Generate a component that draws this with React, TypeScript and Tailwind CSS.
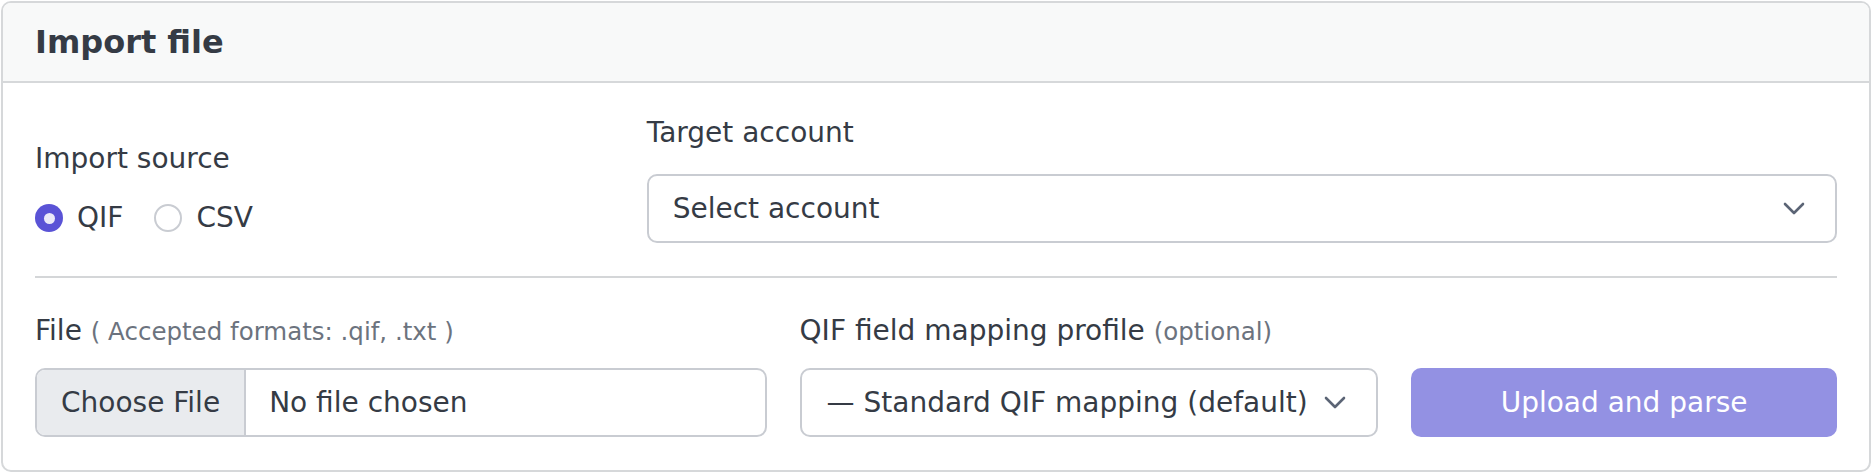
import React from "react";

function Chevron() {
  return (
    <svg width="22" height="13" viewBox="0 0 22 13" fill="none" className="shrink-0">
      <path d="M2 2l9 9 9-9" stroke="#5b6475" strokeWidth="2.6" strokeLinecap="round" strokeLinejoin="round" />
    </svg>
  );
}

function Radio({ label, checked }: { label: string; checked?: boolean }) {
  return (
    <label className="flex items-center gap-[14px]">
      {checked ? (
        <span className="flex h-[28px] w-[28px] items-center justify-center rounded-full bg-[#5a53d6]">
          <span className="h-[11px] w-[11px] rounded-full bg-[#ebeaf8]" />
        </span>
      ) : (
        <span className="h-[28px] w-[28px] rounded-full border-2 border-[#c9ccd2] bg-white" />
      )}
      <span>{label}</span>
    </label>
  );
}

export default function App() {
  return (
    <div className="bg-white p-px font-['DejaVu_Sans',sans-serif] text-[28px] leading-[42px] text-[#353b45]">
      <div className="overflow-hidden rounded-[10px] border-2 border-[#d6d8da]">
        <div className="flex h-[80px] items-center border-b-2 border-[#d6d8da] bg-[#f8f9f9] px-[32px]">
          <h2 className="text-[32px] font-bold">Import file</h2>
        </div>

        <div className="px-[32px] pt-[29px] pb-[33px]">
          <div className="grid grid-cols-12 items-end gap-x-[33px]">
            <div className="col-span-4 pb-[4px]">
              <div className="mb-[17px]">Import source</div>
              <div className="flex items-center gap-[31px]">
                <Radio label="QIF" checked />
                <Radio label="CSV" />
              </div>
            </div>
            <div className="col-span-8">
              <div className="mb-[20px]">Target account</div>
              <div className="flex h-[69px] items-center justify-between rounded-[10px] border-2 border-[#c9ccd2] bg-white pl-[24px] pr-[30px]">
                <span>Select account</span>
                <Chevron />
              </div>
            </div>
          </div>

          <div className="mt-[33px] mb-[32px] h-[2px] bg-[#d4d6d8]" />

          <div className="grid grid-cols-12 items-end gap-x-[33px]">
            <div className="col-span-5">
              <div className="mb-[15px]">
                File{" "}
                <span className="text-[24.5px] text-[#6c737e]">( Accepted formats: .qif, .txt )</span>
              </div>
              <div className="flex h-[69px] overflow-hidden rounded-[10px] border-2 border-[#c9ccd2] bg-white">
                <div className="flex items-center border-r-2 border-[#c9ccd2] bg-[#e9ebee] px-[24px]">Choose File</div>
                <div className="flex items-center pl-[23px]">No file chosen</div>
              </div>
            </div>
            <div className="col-span-4">
              <div className="mb-[15px]">
                QIF field mapping profile{" "}
                <span className="text-[24.5px] text-[#6c737e]">(optional)</span>
              </div>
              <div className="flex h-[69px] items-center justify-between rounded-[10px] border-2 border-[#c9ccd2] bg-white pl-[25px] pr-[30px]">
                <span className="whitespace-nowrap">— Standard QIF mapping (default)</span>
                <Chevron />
              </div>
            </div>
            <div className="col-span-3">
              <button
                disabled
                className="flex h-[69px] w-full items-center justify-center rounded-[10px] bg-[#9391e3] text-white"
              >
                Upload and parse
              </button>
            </div>
          </div>
        </div>
      </div>
    </div>
  );
}
